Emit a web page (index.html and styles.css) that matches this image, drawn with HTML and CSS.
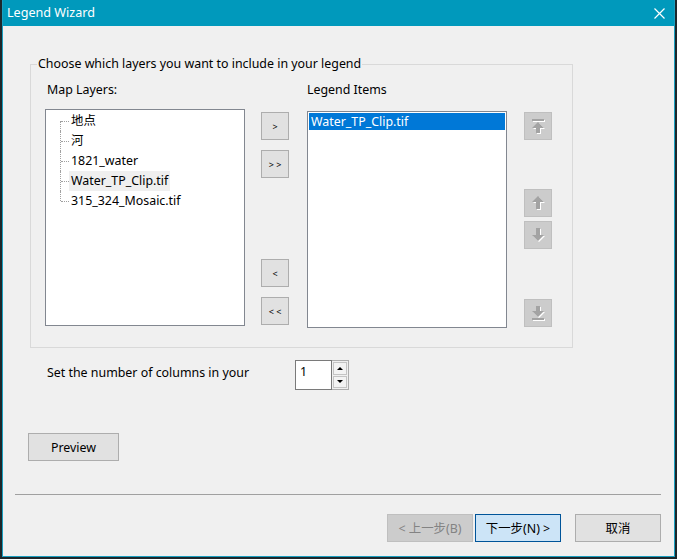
FILE: index.html
```html
<!DOCTYPE html>
<html lang="en">
<head>
  <meta charset="UTF-8" />
  <meta name="viewport" content="width=device-width, initial-scale=1.0" />
  <title>Legend Wizard</title>
  <link rel="stylesheet" href="styles.css">
</head>
<body>
  <div class="window">
    <div class="titlebar">
      <span class="title">Legend Wizard</span>
      <svg class="close" width="11" height="11" viewBox="0 0 11 11">
        <path d="M0.5 0.5 L10.5 10.5 M10.5 0.5 L0.5 10.5" stroke="#fff" stroke-width="1.2" fill="none" />
      </svg>
    </div>
    <div class="content">
      <fieldset class="group">
        <legend>Choose which layers you want to include in your legend</legend>
        <div class="group-body">
          <div class="column">
            <div class="label map-label">Map Layers:</div>
            <div class="listbox tree">
              <div class="node first"><span class="node-text">地点</span></div>
              <div class="node"><span class="node-text">河</span></div>
              <div class="node"><span class="node-text">1821_water</span></div>
              <div class="node"><span class="node-text hover">Water_TP_Clip.tif</span></div>
              <div class="node last"><span class="node-text">315_324_Mosaic.tif</span></div>
            </div>
          </div>
          <div class="move-buttons">
            <button class="btn small add">&gt;</button>
            <button class="btn small add-all">&gt; &gt;</button>
            <button class="btn small remove">&lt;</button>
            <button class="btn small remove-all">&lt; &lt;</button>
          </div>
          <div class="column legend-col">
            <div class="label">Legend Items</div>
            <div class="listbox items">
              <div class="item selected">Water_TP_Clip.tif</div>
            </div>
          </div>
          <div class="order-buttons">
            <button class="btn small off to-top">
              <svg width="16" height="16" viewBox="0 0 16 16">
                <g fill="#fff" transform="translate(1 1)"><rect x="2" y="1" width="12" height="2" /><path d="M8 4 L14 10 H10 V15 H6 V10 H2 Z" /></g>
                <g fill="#a3a3a3"><rect x="2" y="1" width="12" height="2" /><path d="M8 4 L14 10 H10 V15 H6 V10 H2 Z" /></g>
              </svg>
            </button>
            <button class="btn small off move-up">
              <svg width="16" height="16" viewBox="0 0 16 16">
                <path fill="#fff" transform="translate(1 1)" d="M8 1 L14 7 H10 V14 H6 V7 H2 Z" />
                <path fill="#a3a3a3" d="M8 1 L14 7 H10 V14 H6 V7 H2 Z" />
              </svg>
            </button>
            <button class="btn small off move-down">
              <svg width="16" height="16" viewBox="0 0 16 16">
                <path fill="#fff" transform="translate(1 1)" d="M6 1 H10 V8 H14 L8 14 L2 8 H6 Z" />
                <path fill="#a3a3a3" d="M6 1 H10 V8 H14 L8 14 L2 8 H6 Z" />
              </svg>
            </button>
            <button class="btn small off to-bottom">
              <svg width="16" height="16" viewBox="0 0 16 16">
                <g fill="#fff" transform="translate(1 1)"><path d="M6 1 H10 V6 H14 L8 12 L2 6 H6 Z" /><rect x="2" y="13" width="12" height="2" /></g>
                <g fill="#a3a3a3"><path d="M6 1 H10 V6 H14 L8 12 L2 6 H6 Z" /><rect x="2" y="13" width="12" height="2" /></g>
              </svg>
            </button>
          </div>
        </div>
      </fieldset>

      <div class="columns-row">
        <div class="columns-label">Set the number of columns in your</div>
        <div class="spin">
          <div class="spin-input">1</div>
          <div class="spin-arrows">
            <div class="spin-btn"><span class="tri tri-up"></span></div>
            <div class="spin-btn"><span class="tri tri-down"></span></div>
          </div>
        </div>
      </div>

      <button class="btn preview">Preview</button>

      <div class="separator"></div>

      <div class="footer">
        <button class="btn wide off back">&lt; 上一步(B)</button>
        <button class="btn wide next">下一步(N) &gt;</button>
        <button class="btn wide cancel">取消</button>
      </div>
    </div>
  </div>
</body>
</html>
```

FILE: styles.css
```css
* {
  box-sizing: border-box;
}
body {
  margin: 0;
  background-color: #1c272b;
  font-family: "Noto Sans", "Noto Sans CJK SC", sans-serif;
  font-size: 12.4px;
  color: #000;
  height: 559px;
  overflow: hidden;
}
.window {
  margin-left: 2px;
  width: 673px;
  height: 557px;
  border: 1px solid #1a9fc0;
  border-top: 0;
  background-color: #f0f0f0;
  display: flex;
  flex-direction: column;
}
.titlebar {
  height: 26px;
  background-color: #0099bc;
  display: flex;
  align-items: center;
  padding-left: 4px;
  flex-shrink: 0;
}
.title {
  color: #fff;
  font-size: 12.6px;
  line-height: 16px;
}
.close {
  margin-left: auto;
  margin-right: 9px;
}
.content {
  display: flex;
  flex-direction: column;
  align-items: flex-start;
}

/* group box */
.group {
  margin: 30px 0 0 27px;
  width: 543px;
  border: 1px solid #d9d9d9;
  padding: 10px 0 19px 14px;
  min-inline-size: 0;
}
.group legend {
  margin-left: -8px;
  padding: 0 1px;
  line-height: 16px;
}
.group-body {
  display: flex;
  align-items: flex-start;
}
.label {
  line-height: 16px;
  height: 16px;
}
.map-label {
  margin-left: 2px;
}
.listbox {
  width: 200px;
  height: 217px;
  background-color: #fff;
  border: 1px solid #828790;
}
.tree {
  margin-top: 11px;
  padding-top: 1px;
}
.node {
  position: relative;
  height: 20px;
  padding-left: 23px;
  display: flex;
  align-items: center;
}
.node::before {
  content: "";
  position: absolute;
  left: 14px;
  top: 0;
  bottom: 0;
  border-left: 1px dotted #a0a0a0;
}
.node.first::before {
  top: 10px;
}
.node.last::before {
  bottom: 10px;
}
.node::after {
  content: "";
  position: absolute;
  left: 15px;
  top: 10px;
  width: 8px;
  border-top: 1px dotted #a0a0a0;
}
.node-text {
  padding: 0 2px;
  line-height: 20px;
}
.node-text.hover {
  background-color: #efefef;
}
.legend-col {
  margin-left: 18px;
}
.items {
  margin-top: 13px;
  padding: 1px;
}
.item {
  height: 17px;
  line-height: 17px;
  padding-left: 2px;
}
.item.selected {
  background-color: #0078d7;
  color: #fff;
}

/* buttons */
.btn {
  font-family: "Noto Sans", "Noto Sans CJK SC", sans-serif;
  font-size: 12.4px;
  background-color: #e1e1e1;
  border: 1px solid #adadad;
  color: #000;
  padding: 0;
  margin: 0;
  display: flex;
  align-items: center;
  justify-content: center;
}
.btn.off {
  background-color: #cccccc;
  border-color: #bfbfbf;
  color: #838383;
}
.small {
  width: 28px;
  height: 28px;
  font-size: 9px;
}
.move-buttons {
  margin: 30px 0 0 16px;
  display: flex;
  flex-direction: column;
}
.add-all {
  margin-top: 10px;
}
.remove {
  margin-top: 81px;
}
.remove-all {
  margin-top: 10px;
}
.order-buttons {
  margin: 30px 0 0 17px;
  display: flex;
  flex-direction: column;
}
.move-up {
  margin-top: 49px;
}
.move-down {
  margin-top: 4px;
}
.to-bottom {
  margin-top: 50px;
}

/* columns spinner */
.columns-row {
  margin: 12px 0 0 44px;
  display: flex;
  align-items: flex-start;
}
.columns-label {
  width: 248px;
  margin-top: 5px;
  line-height: 16px;
}
.spin {
  display: flex;
  height: 30px;
}
.spin-input {
  width: 37px;
  height: 30px;
  background-color: #fff;
  border: 1px solid #7a7a7a;
  padding: 3px 0 0 4px;
  line-height: 16px;
}
.spin-arrows {
  width: 17px;
  height: 30px;
  border: 1px solid #adadad;
  border-left: 0;
  padding: 1px;
  display: flex;
  flex-direction: column;
  gap: 1px;
}
.spin-btn {
  flex: 1;
  background-color: #f3f3f3;
  border: 1px solid #c4c4c4;
  display: flex;
  align-items: center;
  justify-content: center;
}
.tri {
  width: 0;
  height: 0;
  border-left: 3px solid transparent;
  border-right: 3px solid transparent;
}
.tri-up {
  border-bottom: 3px solid #000;
}
.tri-down {
  border-top: 3px solid #000;
}

.preview {
  margin: 43px 0 0 25px;
  width: 91px;
  height: 28px;
}
.separator {
  margin: 33px 0 0 12px;
  width: 646px;
  height: 1px;
  background-color: #a0a0a0;
}
.footer {
  margin: 19px 0 0 384px;
  display: flex;
}
.wide {
  width: 86px;
  height: 28px;
}
.next {
  margin-left: 2px;
  background-color: #cce4f7;
  border-color: #005499;
}
.cancel {
  margin-left: 14px;
}
```
